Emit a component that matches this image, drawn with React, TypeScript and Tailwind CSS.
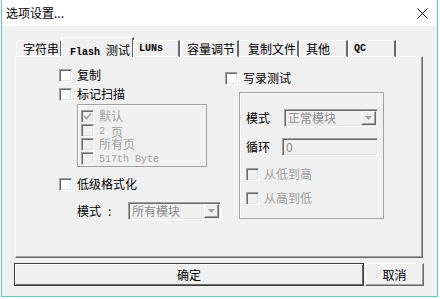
import React from "react";

const cjk = "font-['Noto_Sans_CJK_SC','Noto_Sans',sans-serif]";
const mono = "font-['Liberation_Mono','DejaVu_Sans_Mono',monospace]";

function Check({ checked = false, disabled = false }: { checked?: boolean; disabled?: boolean }) {
    return (
        <span
            className={
                "w-[13px] h-[13px] shrink-0 border border-t-[#a0a0a0] border-l-[#a0a0a0] border-b-white border-r-white shadow-[inset_1px_1px_0_#696969,inset_-1px_-1px_0_#e3e3e3] flex items-center justify-center " +
                (disabled ? "bg-[#f0f0f0]" : "bg-white")
            }
        >
            {checked && (
                <svg width="9" height="9" viewBox="0 0 9 9">
                    <path d="M1 4 L3.5 6.5 L8 1.5" stroke={disabled ? "#a0a0a0" : "#000"} strokeWidth="1.6" fill="none" />
                </svg>
            )}
        </span>
    );
}

function CheckRow({ label, checked, disabled, className = "" }: { label: React.ReactNode; checked?: boolean; disabled?: boolean; className?: string }) {
    return (
        <div className={"flex items-center h-[14px] " + className}>
            <Check checked={checked} disabled={disabled} />
            <span className={"ml-[5px] text-[12px] leading-[12px] whitespace-nowrap " + (disabled ? "text-[#a0a0a0]" : "text-black")}>{label}</span>
        </div>
    );
}

function Combo({ text, width }: { text: string; width: string }) {
    return (
        <div className={"h-[18px] flex items-center bg-[#f0f0f0] border border-t-[#a0a0a0] border-l-[#a0a0a0] border-b-white border-r-white shadow-[inset_1px_1px_0_#696969,inset_-1px_-1px_0_#e3e3e3] " + width}>
            <span className="flex-1 pl-[3px] text-[12px] leading-none text-[#8a8a8a]">{text}</span>
            <span className="w-[15px] h-[14px] mr-[1px] border border-t-white border-l-white border-b-[#696969] border-r-[#696969] shadow-[inset_-1px_-1px_0_#a0a0a0] flex items-center justify-center">
                <svg width="7" height="4" viewBox="0 0 7 4">
                    <path d="M0 0 H7 L3.5 4 Z" fill="#a0a0a0" />
                </svg>
            </span>
        </div>
    );
}

const tabs = [
    { label: "字符串", w: "w-[46px]", pl: "pl-[6px]" },
    { label: "Flash 测试", w: "w-[73px]", pl: "pl-[8px]", active: true },
    { label: "LUNs", w: "w-[47px]", pl: "pl-[5px]", monoOnly: true },
    { label: "容量调节", w: "w-[59px]", pl: "pl-[6px]" },
    { label: "复制文件", w: "w-[60px]", pl: "pl-[8px]" },
    { label: "其他", w: "w-[49px]", pl: "pl-[6px]" },
    { label: "QC", w: "w-[48px]", pl: "pl-[5px]", monoOnly: true },
];

function TabLabel({ label, monoOnly }: { label: string; monoOnly?: boolean }) {
    if (monoOnly) return <span className={mono + " text-[10px] font-bold"}>{label}</span>;
    if (label.startsWith("Flash"))
        return (
            <span>
                <span className={mono + " text-[10px] font-bold"}>Flash </span>
                <span className="text-[12px]">测试</span>
            </span>
        );
    return <span className="text-[12px]">{label}</span>;
}

export default function App() {
    return (
        <div className={"w-[440px] h-[299px] bg-white " + cjk}>
            <div className="ml-[1px] w-[437px] h-[297px] border-x border-b border-[#62c6c6] flex flex-col bg-[#f0f0f0]">
                <header className="h-[26px] bg-white flex items-center justify-between pl-[4px] pr-[9px]">
                    <span className="text-[12px] leading-none text-black">选项设置...</span>
                    <svg width="11" height="11" viewBox="0 0 11 11">
                        <path d="M0.5 0.5 L10.5 10.5 M10.5 0.5 L0.5 10.5" stroke="#000" strokeWidth="1" />
                    </svg>
                </header>

                <div className="mt-[11px] ml-[14px] flex items-end h-[20px] relative z-10 -mb-[1px]">
                    {tabs.map((t) =>
                        t.active ? (
                            <div
                                key={t.label}
                                className={"h-[20px] -mx-[1px] flex items-center bg-[#f0f0f0] border-t border-l border-white border-r-2 border-r-[#696969] " + t.w + " " + t.pl}
                            >
                                <TabLabel label={t.label} />
                            </div>
                        ) : (
                            <div
                                key={t.label}
                                className={"h-[17px] flex items-center bg-[#f0f0f0] border-t border-l border-white border-r-2 border-r-[#696969] border-b border-b-white " + t.w + " " + t.pl}
                            >
                                <TabLabel label={t.label} monoOnly={t.monoOnly} />
                            </div>
                        )
                    )}
                </div>

                <section className="ml-[13px] w-[408px] h-[202px] border border-t-white border-l-white border-r-[#696969] border-b-[#696969] shadow-[inset_-1px_-1px_0_#a0a0a0] flex pl-[43px]">
                    <div className="w-[166px] flex flex-col">
                        <CheckRow label="复制" className="mt-[11px]" />
                        <CheckRow label="标记扫描" className="mt-[5px]" />
                        <div className="ml-[18px] mt-[3px] w-[130px] h-[63px] border border-[#a0a0a0] shadow-[inset_1px_1px_0_#fff] pl-[3px] pt-[4px] flex flex-col">
                            <CheckRow label="默认" checked disabled />
                            <CheckRow
                                label={
                                    <span className="inline-flex items-center h-[12px]">
                                        <span className={mono + " text-[10px] leading-[12px] w-[12px]"}>2</span>页
                                    </span>
                                }
                                disabled
                            />
                            <CheckRow label="所有页" disabled />
                            <CheckRow label={<span className={mono + " text-[10px] leading-[12px]"}>517th Byte</span>} disabled />
                        </div>
                        <CheckRow label="低级格式化" className="mt-[10px]" />
                        <div className="mt-[11px] ml-[18px] flex items-center h-[18px]">
                            <span className="w-[51px] text-[12px] leading-none whitespace-nowrap">
                                模式<span className="ml-[7px]">:</span>
                            </span>
                            <Combo text="所有模块" width="w-[93px]" />
                        </div>
                    </div>

                    <div className="flex flex-col">
                        <CheckRow label="写录测试" className="mt-[14px]" />
                        <div className="ml-[14px] mt-[7px] w-[145px] h-[127px] border border-[#a0a0a0] shadow-[inset_1px_1px_0_#fff] pl-[6px] flex flex-col">
                            <div className="mt-[16px] flex items-center h-[18px]">
                                <span className="w-[38px] text-[12px] leading-none">模式</span>
                                <Combo text="正常模块" width="w-[94px]" />
                            </div>
                            <div className="mt-[11px] flex items-center h-[18px]">
                                <span className="w-[36px] text-[12px] leading-none">循环</span>
                                <div className="w-[96px] h-[18px] flex items-center pl-[3px] bg-[#f0f0f0] border border-t-[#a0a0a0] border-l-[#a0a0a0] border-b-white border-r-white shadow-[inset_1px_1px_0_#696969,inset_-1px_-1px_0_#e3e3e3] text-[12px] leading-none text-[#8a8a8a]">
                                    0
                                </div>
                            </div>
                            <CheckRow label="从低到高" disabled className="mt-[11px]" />
                            <CheckRow label="从高到低" disabled className="mt-[10px]" />
                        </div>
                    </div>
                </section>

                <div className="mt-[5px] ml-[12px] flex gap-[1px]">
                    <button className="w-[350px] h-[23px] border border-[#3c3c3c] shadow-[inset_1px_1px_0_#fff,inset_-1px_-1px_0_#696969] bg-[#f0f0f0] text-[12px] leading-none text-black">
                        确定
                    </button>
                    <button className="w-[59px] h-[23px] border border-t-white border-l-white border-b-[#696969] border-r-[#696969] shadow-[inset_-1px_-1px_0_#a0a0a0] bg-[#f0f0f0] text-[12px] leading-none text-black">
                        取消
                    </button>
                </div>
            </div>
        </div>
    );
}
